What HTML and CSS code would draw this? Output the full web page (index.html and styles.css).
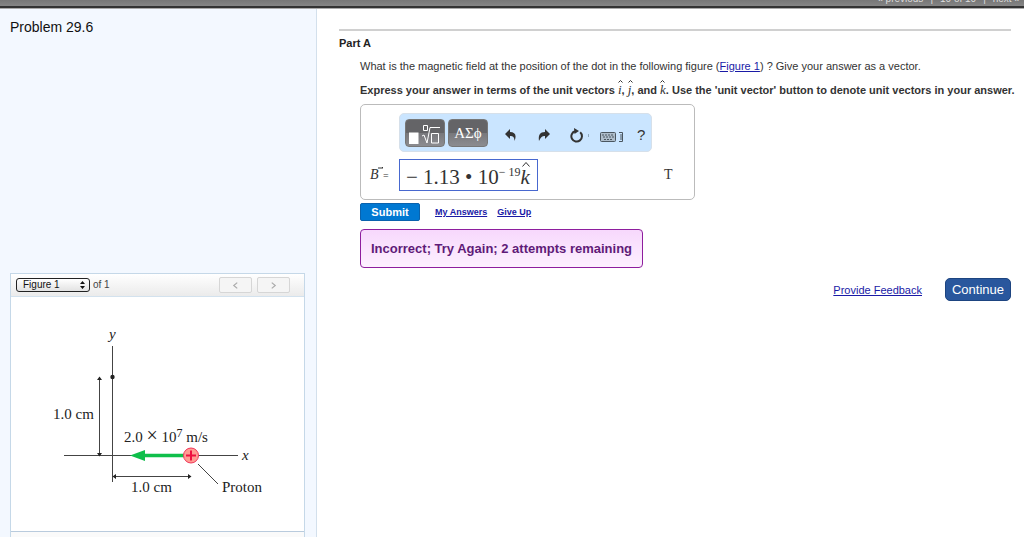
FILE: index.html
```html
<!DOCTYPE html>
<html lang="en">
<head>
<meta charset="utf-8">
<title>Problem 29.6</title>
<link rel="stylesheet" href="styles.css">
</head>
<body>
<header class="topbar">
  <nav class="pager"><a href="#">« previous</a><span>|</span><span>10 of 10</span><span>|</span><a href="#">next »</a></nav>
</header>
<div class="layout">
  <aside class="sidebar">
    <h1 class="problem-title">Problem 29.6</h1>
    <section class="figure-panel">
      <div class="figure-bar">
        <div class="select-wrap">
          <select class="figure-select" id="figure-select" aria-label="Figure"><option>Figure 1</option></select>
          <svg class="select-arrows" viewBox="0 0 5 8" aria-hidden="true"><path d="M0 3L2.5 0L5 3ZM0 5H5L2.5 8Z"/></svg>
        </div>
        <label class="figure-count" for="figure-select">of 1</label>
        <div class="figure-nav">
          <button class="nav-button" aria-label="Previous figure"><svg viewBox="0 0 6 6"><path d="M4.5 .5L1.5 3L4.5 5.5"/></svg></button>
          <button class="nav-button" aria-label="Next figure"><svg viewBox="0 0 6 6"><path d="M1.5 .5L4.5 3L1.5 5.5"/></svg></button>
        </div>
      </div>
      <div class="figure-body">
        <svg class="diagram" viewBox="0 0 240 190" role="img" aria-label="Proton moving left along the x axis">
          <g class="axis">
            <path d="M72.5 26V162M24 135.500H198"/>
            <path d="M59.5 58V135M73 156.5H150M158 144L178 164"/>
          </g>
          <g class="tips">
            <path d="M57 60L59.500 56.500L62 60ZM57 133L59.500 136.500L62 133ZM76 154L72.500 156.500L76 159ZM148 154L151.500 156.500L148 159Z"/>
            <circle cx="72.500" cy="57" r="2.200"/>
          </g>
          <path class="velocity" d="M90 135.500L105 130V133.800H144V137.200H105V141Z"/>
          <circle class="proton" cx="151" cy="135.500" r="7.500"/>
          <path class="plus" d="M146 135.500H156M151 130.500V140.500"/>
          <text class="italic" x="69" y="19">y</text>
          <text class="italic" x="202" y="140">x</text>
          <text x="13" y="99">1.0 cm</text>
          <text x="84" y="122">2.0 <tspan class="times">×</tspan> 10<tspan class="sup" dy="-5">7</tspan><tspan dy="5"> m/s</tspan></text>
          <text x="91" y="172">1.0 cm</text>
          <text x="182" y="172">Proton</text>
        </svg>
      </div>
      <div class="figure-foot"></div>
    </section>
  </aside>
  <main class="content">
    <h2 class="part-title">Part A</h2>
    <div class="part-body">
      <p class="question">What is the magnetic field at the position of the dot in the following figure (<a href="#">Figure 1</a>) ? Give your answer as a vector.</p>
      <p class="instruction">Express your answer in terms of the unit vectors <i class="unit">i<svg class="hat" viewBox="0 0 5 3"><path d="M.5 2.500L2.500 .5L4.500 2.500"/></svg></i>, <i class="unit">j<svg class="hat" viewBox="0 0 5 3"><path d="M.5 2.500L2.500 .5L4.500 2.500"/></svg></i>, and <i class="unit">k<svg class="hat" viewBox="0 0 5 3"><path d="M.5 2.500L2.500 .5L4.500 2.500"/></svg></i>. Use the 'unit vector' button to denote unit vectors in your answer.</p>
      <div class="answer-box">
        <div class="toolbar">
          <button class="tool-dark" aria-label="Templates"><svg class="root-icon" viewBox="0 0 32 20"><rect x="0" y="9" width="9" height="11" fill="#fff"/><path d="M13 12L15 11L18 19L21 3.500H31M22.500 9.500H29.500V19H22.500ZM14.500 1.500H18.500V6.500H14.500Z"/></svg></button>
          <button class="tool-dark">ΑΣϕ</button>
          <button class="tool undo" aria-label="Undo"><svg viewBox="0 0 12 12"><path class="fill" d="M0 5L5 0V3C10 3 12 6 9.500 12C9.500 8 8 7 5 7V10Z"/></svg></button>
          <button class="tool redo" aria-label="Redo"><svg viewBox="0 0 12 12"><path class="fill" d="M12 5L7 0V3C2 3 0 6 1 12C3 8 4 7 7 7V10Z"/></svg></button>
          <button class="tool reset" aria-label="Reset"><svg class="reset-icon" viewBox="0 0 20 15"><path class="line" d="M11.200 4.300A5.300 5.300 0 1 1 6 3.200"/><path class="fill" d="M5 0L10 3L5.500 6Z"/><path class="tick" d="M19.500 6V9"/></svg></button>
          <button class="tool keyboard" aria-label="Keyboard shortcuts"><svg class="keyboard-icon" viewBox="0 0 23 10"><rect class="board" x=".5" y=".5" width="15" height="9" rx="1"/><path class="keys" d="M2 3H14M3 5H14M4 7.500H12"/><path d="M19 .5H22.500V9.500H19M21 2V8"/></svg></button>
          <button class="tool help" aria-label="Help">?</button>
        </div>
        <div class="answer-row">
          <span class="quantity"><i class="vector">B<svg viewBox="0 0 6 4"><path d="M0 2H5M4 1L5 2"/></svg></i><span class="equals">=</span></span>
          <div class="math-field" role="textbox" aria-label="Answer" contenteditable="true" spellcheck="false">− 1.13 • 10<sup>− 19</sup><i class="khat">k<svg viewBox="0 0 8 5"><path d="M.5 4.500L4 .5L7.500 4.500"/></svg></i></div>
          <span class="unit-label">T</span>
        </div>
      </div>
      <div class="actions">
        <button class="submit">Submit</button>
        <a href="#">My Answers</a>
        <a href="#">Give Up</a>
      </div>
      <div class="feedback" role="status">Incorrect; Try Again; 2 attempts remaining</div>
    </div>
    <div class="page-actions">
      <a href="#">Provide Feedback</a>
      <button class="continue">Continue</button>
    </div>
  </main>
</div>
</body>
</html>
```
FILE: styles.css
```css
* { box-sizing: border-box; }
body {
  margin: 0;
  min-height: 100vh;
  display: flex;
  flex-direction: column;
  background: #fff;
  color: #333;
  font: 11px/14px "Liberation Sans", Arial, sans-serif;
}
h1, h2, p { margin: 0; }
button { margin: 0; padding: 0; font-family: inherit; cursor: pointer; }
a { color: #1a1aa6; }
svg { display: block; }

.topbar {
  height: 9px;
  display: flex;
  justify-content: flex-end;
  align-items: flex-end;
  overflow: hidden;
  background: linear-gradient(#777, #858585 6px, #333 6px, #333 8px, #aaa 8px);
}
.pager { display: flex; gap: 7px; padding: 0 4px 4px 0; color: #ddd; font-size: 10px; line-height: 12px; white-space: nowrap; }
.pager a { color: #ddd; text-decoration: none; }

.layout { flex: 1; display: flex; }
.sidebar {
  flex: 0 0 316px;
  display: flex;
  flex-direction: column;
  padding: 9px 11px 0 10px;
  background: #f3f8ff;
  border-right: 1px solid #d3e0ec;
}
.problem-title { color: #111; font-size: 14px; line-height: 18px; font-weight: 400; }
.figure-panel {
  flex: 1;
  display: flex;
  flex-direction: column;
  margin-top: 237px;
  background: #fff;
  border: 1px solid #c5d8e8;
  border-bottom: 0;
}
.figure-bar {
  display: flex;
  align-items: center;
  height: 23px;
  padding: 0 14px 0 5px;
  background: linear-gradient(#fff, #ebebeb);
  border-bottom: 1px solid #d3e2ee;
  font-size: 10px;
}
.select-wrap { position: relative; }
.figure-select {
  appearance: none;
  display: block;
  width: 74px;
  height: 14px;
  padding: 0 6px;
  border: 1px solid #222;
  border-radius: 3px;
  background: linear-gradient(#fff, #e2e2e2);
  color: #111;
  font: 10px/12px "Liberation Sans", Arial, sans-serif;
}
.select-arrows { position: absolute; right: 5px; top: 3px; width: 5px; height: 8px; fill: #111; pointer-events: none; }
.figure-count { margin-left: 3px; color: #444; }
.figure-nav { display: flex; gap: 5px; margin-left: auto; }
.nav-button {
  display: grid;
  place-items: center;
  width: 33px;
  height: 16px;
  border: 1px solid #d6d6d6;
  border-radius: 2px;
  background: #f5f5f5;
}
.nav-button svg { width: 7px; height: 7px; fill: none; stroke: #aaa; }

.figure-body { padding: 23px 24px 21px 29px; }
.diagram { width: 240px; height: 190px; overflow: visible; fill: #222; font: 15px "Liberation Serif", "Times New Roman", serif; }
.diagram .axis { fill: none; stroke: #444; stroke-width: 1; }
.diagram .italic { font-style: italic; }
.diagram .sup { font-size: 12px; }
.diagram .times { font-size: 20px; }
.velocity { fill: #0fbf4b; }
.proton { fill: #ff9c92; stroke: #f0355a; }
.plus { stroke: #ee1040; stroke-width: 2; }
.figure-foot { flex: 1; background: #fafafa; border-top: 1px solid #b9cbdd; }

.content { flex: 1; min-width: 0; padding: 20px 13px 0 22px; }
.part-title {
  padding-top: 4px;
  border-top: 2px solid #d0d0d0;
  color: #222;
  font-size: 11px;
  line-height: 16px;
}
.part-body { padding-left: 21px; }
.question { margin-top: 8px; line-height: 14px; white-space: nowrap; }
.instruction { margin-top: 7px; line-height: 20px; font-weight: 700; white-space: nowrap; }
.unit { position: relative; font: italic 400 13px/14px "Liberation Serif", "Times New Roman", serif; }
.hat { position: absolute; left: 0; top: -2px; width: 5px; height: 3px; fill: none; stroke: #333; }

.answer-box {
  width: 335px;
  height: 96px;
  margin-top: 4px;
  padding: 8px;
  border: 1px solid #bbb;
  border-radius: 5px;
}
.toolbar {
  display: flex;
  align-items: center;
  width: 253px;
  height: 39px;
  margin-left: 30px;
  padding: 0 5px;
  border: 1px solid #d6e0ea;
  border-radius: 5px;
  background: #cae5ff;
}
.tool-dark {
  display: grid;
  place-items: center;
  width: 40px;
  height: 28px;
  margin-right: 3px;
  border: 1px solid #777;
  border-radius: 4px;
  background: linear-gradient(#646467 50%, #77777b 50%, #8c8c90);
  color: #fff;
  font: 15px/18px "Liberation Serif", "Times New Roman", serif;
}
.root-icon { width: 32px; height: 20px; margin-top: 2px; fill: none; stroke: #fff; stroke-width: 1; }
.tool { border: 0; background: none; color: #333; }
.tool svg { width: 12px; height: 12px; }
.tool .fill { fill: #333; }
.tool .line { fill: none; stroke: #333; stroke-width: 2; }
.tool .tick { stroke: #8fa9bf; stroke-width: 1; }
.undo { margin: 5px 0 0 14px; }
.redo { margin: 5px 0 0 21px; }
.reset { margin: 5px 0 0 19px; }
.keyboard { margin: 9px 0 0 11px; }
.tool .reset-icon { width: 20px; height: 15px; }
.tool .keyboard-icon { width: 23px; height: 10px; fill: none; stroke: #4a5660; stroke-width: 1; }
.tool .board { fill: #aebdcb; }
.keys { stroke-dasharray: 2 1; }
.help { margin: 5px 0 0 14px; font-size: 15px; line-height: 18px; }

.answer-row {
  display: flex;
  align-items: center;
  margin-top: 7px;
  font-family: "Liberation Serif", "Times New Roman", serif;
}
.quantity { display: flex; align-items: baseline; width: 30px; padding-left: 1px; font-size: 14px; }
.vector { position: relative; width: 13px; }
.vector svg { position: absolute; left: 8px; top: -2px; width: 6px; height: 4px; fill: none; stroke: #333; }
.equals { font-size: 10px; }
.math-field {
  width: 139px;
  height: 32px;
  padding: 2px 6px 0;
  border: 1px solid #4868cf;
  font-size: 21px;
  line-height: 30px;
  white-space: nowrap;
  outline: 0;
}
.math-field sup { font-size: 12px; line-height: 0; vertical-align: 8px; }
.khat { position: relative; }
.khat svg { position: absolute; left: 2px; top: -3px; width: 8px; height: 5px; fill: none; stroke: #333; }
.unit-label { margin-left: 126px; font-size: 14px; }

.actions { display: flex; align-items: center; gap: 10px; margin-top: 3px; font-size: 9px; font-weight: 700; }
.submit {
  width: 60px;
  height: 18px;
  margin-right: 5px;
  border: 1px solid #0a62ad;
  border-radius: 2px;
  background: #0078d2;
  color: #fff;
  font-size: 11px;
  font-weight: 700;
}
.feedback {
  width: fit-content;
  margin-top: 8px;
  padding: 9px 10px;
  border: 1px solid #8e1e9e;
  border-radius: 4px;
  background: linear-gradient(#f7d8fc, #fdf0ff);
  color: #5f1b78;
  font-size: 13px;
  line-height: 19px;
  font-weight: 700;
}
.page-actions { display: flex; justify-content: flex-end; align-items: center; gap: 23px; margin-top: 10px; }
.continue {
  width: 66px;
  height: 23px;
  border: 1px solid #1d4480;
  border-radius: 5px;
  background: #29579d;
  color: #fff;
  font-size: 13px;
}
```
